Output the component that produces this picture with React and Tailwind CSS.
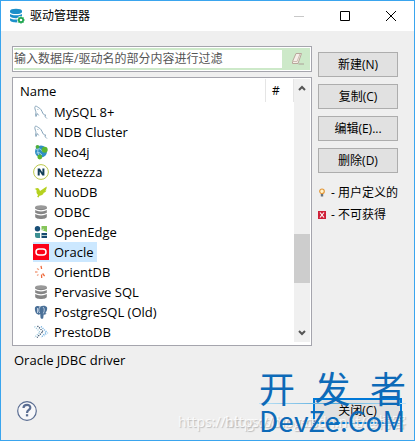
import React, { useState } from "react";
import clsx from "clsx";

const MySqlIcon = () => (
  <svg viewBox="0 0 16 16" className="w-4 h-4" fill="none" stroke="#86a4ba" strokeWidth="1">
    <path d="M3 12.500c-1-2 .4-3.300-.2-5C2.300 5.800 1.400 3.800 2 2.600c.8-1 2.200 0 3.200.8C7.500 4.300 8.700 6.500 9.700 9c.5 1.300 1.600 2 3.300 2.300-1.100.2-1.400.7-.9 1.300.6.700 1.300 1 1.800 1.900" />
    <path d="M3 12.500l1.200-3 1.500 1.900M4.500 5l.6.800" />
  </svg>
);

const Neo4jIcon = () => (
  <svg viewBox="0 0 16 16" className="w-4 h-4">
    <circle cx="8" cy="7.500" r="6" fill="#2f8fc4" />
    <path d="M3 5.500Q7 3 10 8M3.500 9Q6 7 9 11M5 4Q4 8 6 12" fill="none" stroke="#b9def0" strokeWidth="0.8" />
    <circle cx="4.500" cy="2.800" r="1.900" fill="#4fae3d" />
    <circle cx="11.700" cy="5.800" r="3" fill="#5cb531" />
    <circle cx="6.800" cy="13" r="2.400" fill="#5cb531" />
  </svg>
);

const NetezzaIcon = () => (
  <svg viewBox="0 0 16 16" className="w-4 h-4">
    <circle cx="8" cy="8" r="7.400" fill="#fff" stroke="#bcc94a" strokeWidth="1" />
    <path d="M4.700 4.500h2.200l2.500 4v-4h2v7H9.300l-2.600-4v4h-2z" fill="#123e56" />
  </svg>
);

const NuoIcon = () => (
  <svg viewBox="0 0 16 16" className="w-4 h-4" fill="#b5d11f">
    <path d="M1.500 5l2.500-1c2 0 2.400 1.500 3 3l6.700-4.400c.1 2-.4 3.300-1.600 4.100l1.400-.1c-.6 1.300-1.500 2-2.700 2.200-.8 2.200-2.500 3-4.300 3L5.500 13.500l-1.400-.8 1-1.700C3.500 9.900 3.300 8.300 3.600 6.500 3.400 5.600 2.500 5.300 1.500 5z" />
  </svg>
);

const StackIcon = () => (
  <svg viewBox="0 0 16 16" className="w-4 h-4">
    <path d="M2.200 3v9.800C2.200 15.800 13.800 15.800 13.800 12.800V3z" fill="#858585" />
    <ellipse cx="8" cy="3.200" rx="5.800" ry="1.900" fill="#999" />
    <path d="M2 5.200c2 2.100 10 2.100 12 0M2 9.200c2 2.100 10 2.100 12 0" fill="none" stroke="#fff" strokeWidth="1.200" />
  </svg>
);

const OpenEdgeIcon = () => (
  <svg viewBox="0 0 16 16" className="w-4 h-4">
    <circle cx="4.500" cy="4.800" r="2.700" fill="#194f77" />
    <path d="M8.500 2H14v6L8.500 6z" fill="#86c55a" />
    <path d="M2 9h5v5H4a2 2 0 0 1-2-2z" fill="#3b8f92" />
    <path d="M8.500 9H14v5H8.500z" fill="#174a70" />
    <path d="M8.500 6.500L11 5M8.500 11.500H14" fill="none" stroke="#dcefe5" strokeWidth="0.8" />
  </svg>
);

const OracleIcon = () => (
  <svg viewBox="0 0 16 16" className="w-4 h-4">
    <path d="M0 0h16v16H0z" fill="#fc0017" />
    <rect x="3" y="5" width="10" height="6" rx="3" fill="none" stroke="#fff" strokeWidth="1.500" />
  </svg>
);

const OrientIcon = () => (
  <svg viewBox="0 0 16 16" className="w-4 h-4" fill="none" strokeWidth="1.300">
    <path d="M8 1.800l.6 3.200M9.600 9.500l2 2.600M8.500 10.500l.2 3.500" stroke="#ef6a3c" />
    <path d="M4 4.500l2 1.300M2 8h2.500M4 11.500l1.500-1" stroke="#f2a183" />
  </svg>
);

const PostgresIcon = () => (
  <svg viewBox="0 0 16 16" className="w-4 h-4">
    <path d="M2 3.500c1.500-2.200 4-1.500 5-.8 2.500-1.300 6-1.200 7.100.8.4 2-.5 4-1.800 5.700l1.300.4c-.7 1-1.800 1.200-2.900 1l-.5 3.600c-1 .9-2.500.6-2.700-.7L7.200 10c-1 1-1.800.9-2.300.2C3.300 11 1.400 6.500 2 3.500z" fill="#4a7098" />
    <path d="M7 3c-1.500 1.500-1.700 4.500-.3 6M10 3c1.700 1.500 1.500 4 .3 6.500M4.500 4v5" fill="none" stroke="#c7d6e5" strokeWidth="0.9" />
  </svg>
);

const PrestoIcon = () => (
  <svg viewBox="0 0 16 16" className="w-4 h-4" fill="none" strokeWidth="1.300" strokeDasharray="1.100 1.100">
    <path d="M1.500 2.500L7 8l-5.500 5.500" stroke="#9cc7dc" />
    <path d="M4.500 2L10 7.500 4 13.500" stroke="#324b66" />
    <path d="M8 2.500L13.500 8 8 13.500" stroke="#67a9dd" />
    <path d="M11 5.500L14.500 9 11 12" stroke="#a6d0ef" />
  </svg>
);

const BulbIcon = () => (
  <svg viewBox="0 0 8 10" className="w-2 h-[10px]">
    <circle cx="4" cy="3.300" r="2.300" fill="#fff4cf" stroke="#e3983b" strokeWidth="1.200" />
    <path d="M2.800 6h2.400v2.500H2.800z" fill="#66717b" />
  </svg>
);

const UnavailableIcon = () => (
  <svg viewBox="0 0 8 8" className="w-2 h-2">
    <path d="M0 0h8v8H0z" fill="#cf2038" />
    <path d="M2 1.500l4 5M6 1.500l-4 5" stroke="#fff" strokeWidth="1.200" />
  </svg>
);

const AppIcon = () => (
  <svg viewBox="0 0 16 16" className="w-4 h-4">
    <path d="M1 3v9c0 3.200 12 3.200 12 0V3z" fill="#1c8fc9" />
    <ellipse cx="7" cy="3" rx="6" ry="2.300" fill="#1c8fc9" />
    <path d="M.8 4.800c2 2.400 10.400 2.400 12.400 0M.8 9c2 2.400 10.400 2.400 12.400 0" fill="none" stroke="#fff" strokeWidth="1.300" />
    <circle cx="12" cy="12" r="4" fill="#fff" />
    <circle cx="12" cy="12" r="2.100" fill="none" stroke="#19a34a" strokeWidth="1.500" />
    <path d="M12 8.500v1.500M12 14v1.500M8.500 12H10M14 12h1.500M9.500 9.500l1 1M13.500 13.500l1 1M14.500 9.500l-1 1M9.500 14.500l1-1" stroke="#19a34a" strokeWidth="1.400" />
  </svg>
);

const drivers = [
  { name: "MySQL 8+", Icon: MySqlIcon },
  { name: "NDB Cluster", Icon: MySqlIcon },
  { name: "Neo4j", Icon: Neo4jIcon },
  { name: "Netezza", Icon: NetezzaIcon },
  { name: "NuoDB", Icon: NuoIcon },
  { name: "ODBC", Icon: StackIcon },
  { name: "OpenEdge", Icon: OpenEdgeIcon },
  { name: "Oracle", Icon: OracleIcon },
  { name: "OrientDB", Icon: OrientIcon },
  { name: "Pervasive SQL", Icon: StackIcon },
  { name: "PostgreSQL (Old)", Icon: PostgresIcon },
  { name: "PrestoDB", Icon: PrestoIcon },
];

const actions = ["新建(N)", "复制(C)", "编辑(E)...", "删除(D)"];

const Watermark = () => (
  <div className="pointer-events-none absolute right-2 bottom-1 w-[228px] h-16">
    <p className="absolute left-0 bottom-1 text-[14px] leading-5 whitespace-nowrap text-white/80 [text-shadow:1px_1px_1px_#bbb]">
      https://blog.csdn.net/
    </p>
    <p className="absolute right-0 bottom-1 text-[14px] leading-5 whitespace-nowrap text-white/80 [text-shadow:1px_1px_1px_#bbb]">
      https://blog.csdn.net/@博客
    </p>
    <div className="absolute right-0 bottom-0 w-[147px] text-[#0d6ab8] font-['Noto_Sans_CJK_SC',sans-serif]">
      <div className="flex justify-between text-[36px] leading-8">
        <span>开</span>
        <span>发</span>
        <span>者</span>
      </div>
      <div className="h-px bg-gradient-to-r from-[#bfe3f5] via-[#4aa7dc] to-[#bfe3f5]" />
      <p className="text-[28px] leading-8 whitespace-nowrap">DevZe.CoM</p>
    </div>
  </div>
);

const App = () => {
  const [filter, setFilter] = useState("");
  const [selected, setSelected] = useState("Oracle");

  return (
    <div className="relative min-h-screen flex flex-col border border-[#3aa5ee] bg-[#efefef] text-black text-[12px] leading-5 font-['Open_Sans','Noto_Sans_CJK_SC',sans-serif]">
      {/* Title bar */}
      <header className="flex items-center justify-between h-[30px] bg-white pl-2">
        <h1 className="flex items-center gap-[5px]">
          <AppIcon />
          <span>驱动管理器</span>
        </h1>
        <div className="flex">
          <button aria-label="最小化" disabled className="w-[46px] h-[30px] grid place-items-center">
            <svg viewBox="0 0 10 10" className="w-[10px] h-[10px]" stroke="#c8c8c8">
              <path d="M0 5.500h10" />
            </svg>
          </button>
          <button aria-label="最大化" className="w-[46px] h-[30px] grid place-items-center">
            <svg viewBox="0 0 10 10" className="w-[10px] h-[10px]" fill="none" stroke="#000">
              <path d="M.5.5h9v9h-9z" />
            </svg>
          </button>
          <button aria-label="关闭" className="w-[46px] h-[30px] grid place-items-center">
            <svg viewBox="0 0 10 10" className="w-[10px] h-[10px]" stroke="#000">
              <path d="M0 0l10 10M10 0L0 10" />
            </svg>
          </button>
        </div>
      </header>

      <main className="flex gap-[6px] pl-[11px] pr-4 pt-[15px]">
        <div className="flex-1 min-w-0">
          {/* Filter */}
          <div className="flex items-center h-[26px] border border-[#a5a5ad] bg-white p-px">
            <div className="flex flex-1 items-center h-full bg-[#cde9c9]">
              <input
                type="text"
                aria-label="过滤"
                placeholder="输入数据库/驱动名的部分内容进行过滤"
                value={filter}
                onChange={(e) => setFilter(e.target.value)}
                className="flex-1 min-w-0 h-[18px] bg-white outline-none placeholder:text-[#555]"
              />
              <button aria-label="清除" onClick={() => setFilter("")} className="w-7 pl-1 grid place-items-center">
                <svg viewBox="0 0 16 16" className="w-4 h-4" strokeWidth="1">
                  <path d="M6 2.500h5.500L8 12.500H2.500v-2z" fill="#f6efe9" stroke="#b7a79b" strokeLinejoin="round" />
                  <path d="M2.500 10.500H7L10 3" fill="none" stroke="#cdbdb1" />
                  <path d="M8.500 13h5.500" stroke="#aaa097" />
                </svg>
              </button>
            </div>
          </div>

          {/* Driver list */}
          <div className="mt-[5px] flex border border-[#a5a5ad] bg-white p-px pb-[3px]">
            <table className="flex-1 border-collapse self-start">
              <thead>
                <tr className="h-[23px]">
                  <th className="pl-[6px] text-left font-normal text-[13px]">Name</th>
                  <th className="w-7 border-x border-[#e5e5e5] pl-[6px] text-left font-normal">#</th>
                </tr>
              </thead>
              <tbody>
                {drivers.map(({ name, Icon }) => (
                  <tr key={name} className="h-5">
                    <td colSpan={2} className="p-0 pl-[19px]">
                      <button
                        onClick={() => setSelected(name)}
                        className={clsx(
                          "flex items-center h-5 gap-[5px] pr-1 text-[13px] align-top",
                          selected === name && "bg-[#cce8ff]"
                        )}
                      >
                        <Icon />
                        {name}
                      </button>
                    </td>
                  </tr>
                ))}
              </tbody>
            </table>
            {/* Scrollbar */}
            <div className="w-4 flex flex-col items-center bg-[#f0f0f0] py-[6px]">
              <svg viewBox="0 0 8 6" className="w-2 h-[6px]" fill="none" stroke="#555" strokeWidth="2">
                <path d="M1 5l3-3 3 3" />
              </svg>
              <div className="h-[143px]" />
              <div className="w-full h-[49px] bg-[#cdcdcd]" />
              <div className="flex-1" />
              <svg viewBox="0 0 8 6" className="w-2 h-[6px]" fill="none" stroke="#555" strokeWidth="2">
                <path d="M1 1l3 3 3-3" />
              </svg>
            </div>
          </div>
        </div>

        <aside className="w-[80px] pt-[6px]">
          <div className="flex flex-col gap-[7px]">
            {actions.map((label) => (
              <button key={label} className="h-[25px] border border-[#adadad] bg-[#e1e1e1]">
                {label}
              </button>
            ))}
          </div>
          <ul className="mt-[10px] flex flex-col gap-[2px] whitespace-nowrap">
            <li className="flex items-center gap-[5px]">
              <BulbIcon />- 用户定义的
            </li>
            <li className="flex items-center gap-[5px]">
              <UnavailableIcon />- 不可获得
            </li>
          </ul>
        </aside>
      </main>

      <p className="pl-[13px] pt-1 text-[13px]">{selected} JDBC driver</p>

      <footer className="mt-auto flex items-center justify-between pl-4 pr-3 pb-4">
        <button aria-label="帮助">
          <svg viewBox="0 0 20 20" className="w-5 h-5" fill="none" stroke="#5a6d92">
            <circle cx="10" cy="10" r="9.300" fill="#f8f8fa" strokeWidth="1.200" />
            <path d="M6.500 7c.2-4.300 7.200-4 6.800-.2-.2 2.200-3.300 2.200-3.300 5.200" strokeWidth="2.200" />
            <path d="M8.900 14.300h2.300" strokeWidth="2.200" />
          </svg>
        </button>
        <button className="w-[89px] h-[26px] border-2 border-[#0078d7] bg-[#e1e1e1] leading-[22px]">关闭(C)</button>
      </footer>

      <Watermark />
    </div>
  );
};

export default App;
